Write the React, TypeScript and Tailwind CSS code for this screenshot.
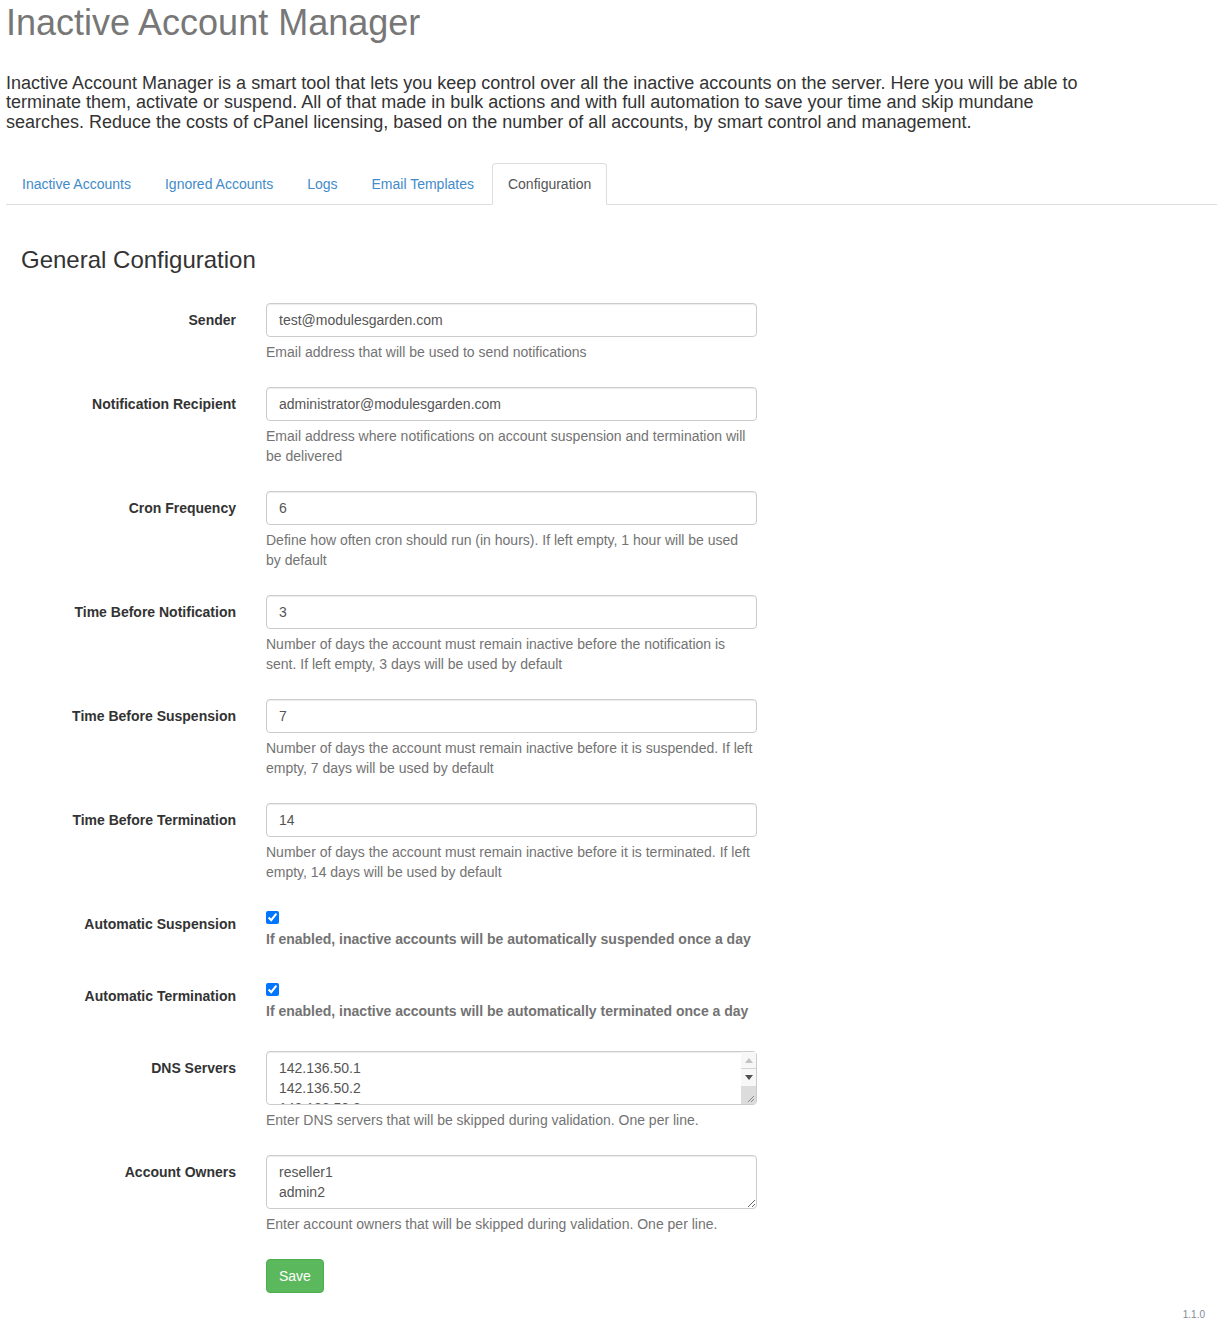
import React from 'react';

const tabs = ['Inactive Accounts', 'Ignored Accounts', 'Logs', 'Email Templates', 'Configuration'];

interface FieldProps {
  label: string;
  value: string;
  help: string;
}

function Label({ text }: { text: string }) {
  return (
    <div className="w-[230px] shrink-0 pr-[15px] pt-[7px] text-right text-[14px] font-bold leading-[20px] text-[#333]">
      {text}
    </div>
  );
}

function Help({ text }: { text: string }) {
  return <p className="mt-[5px] mb-[10px] w-[488px] text-[14px] leading-[20px] text-[#737373]">{text}</p>;
}

function TextField({ label, value, help }: FieldProps) {
  return (
    <div className="mb-[15px] flex">
      <Label text={label} />
      <div className="w-[521px] pl-[15px] pr-[15px]">
        <input
          type="text"
          defaultValue={value}
          className="block h-[34px] w-full rounded-[4px] border border-[#ccc] px-[12px] py-[6px] text-[14px] leading-[20px] text-[#555] shadow-[inset_0_1px_1px_rgba(0,0,0,0.075)] outline-none"
        />
        <Help text={help} />
      </div>
    </div>
  );
}

function CheckField({ label, help }: { label: string; help: string }) {
  return (
    <div className="mb-[15px] flex">
      <Label text={label} />
      <div className="w-[521px] pl-[15px] pr-[15px]">
        <div className="h-[22px] pt-[4px]">
          <input type="checkbox" defaultChecked className="m-0 block h-[13px] w-[13px]" />
        </div>
        <p className="mb-[15px] text-[14px] font-bold leading-[20px] text-[#737373]">{help}</p>
      </div>
    </div>
  );
}

// fake classic scrollbar, headless chrome hides the real one
function ScrollBar() {
  return (
    <div className="pointer-events-none absolute top-[1px] right-[1px] bottom-[1px] flex w-[15px] flex-col bg-[#f7f7f7]">
      <div className="flex h-[17px] items-center justify-center border-b border-[#d4d4d4]">
        <svg width="8" height="5" viewBox="0 0 8 5">
          <path d="M0 5 L4 0 L8 5 Z" fill="#c2c2c2" />
        </svg>
      </div>
      <div className="flex h-[17px] items-center justify-center">
        <svg width="8" height="5" viewBox="0 0 8 5">
          <path d="M0 0 L8 0 L4 5 Z" fill="#505050" />
        </svg>
      </div>
      <div className="relative flex-1 bg-[#dcdcdc]">
        <svg className="absolute right-[1px] bottom-[1px]" width="9" height="9" viewBox="0 0 9 9">
          <path d="M8 2 L2 8 M8 5 L5 8" stroke="#8a8a8a" strokeWidth="1" />
        </svg>
      </div>
    </div>
  );
}

function AreaField({ label, value, help, scroll }: FieldProps & { scroll?: boolean }) {
  return (
    <div className="mb-[15px] flex">
      <Label text={label} />
      <div className="w-[521px] pl-[15px] pr-[15px]">
        <div className="relative">
          <textarea
            rows={2}
            defaultValue={value}
            className="block h-[54px] w-full resize-y overflow-hidden rounded-[4px] border border-[#ccc] px-[12px] py-[6px] text-[14px] leading-[20px] text-[#555] shadow-[inset_0_1px_1px_rgba(0,0,0,0.075)] outline-none"
          />
          {scroll && <ScrollBar />}
        </div>
        <Help text={help} />
      </div>
    </div>
  );
}

export default function App() {
  return (
    <div className="min-h-[1323px] bg-white px-[6px] pt-[3px] font-['Liberation_Sans',Arial,sans-serif] text-[#333]">
      <h1 className="text-[36px] leading-[39.6px] text-[#777]">Inactive Account Manager</h1>
      <p className="mt-[31px] max-w-[1090px] text-[18px] leading-[19.8px] text-[#333]">
        Inactive Account Manager is a smart tool that lets you keep control over all the inactive accounts on the server. Here you
        will be able to terminate them, activate or suspend. All of that made in bulk actions and with full automation to save your
        time and skip mundane searches. Reduce the costs of cPanel licensing, based on the number of all accounts, by smart control
        and management.
      </p>

      <ul className="mt-[30px] flex border-b border-[#ddd]">
        {tabs.map((t) => {
          const active = t === 'Configuration';
          return (
            <li key={t} className="-mb-px mr-[2px]">
              <span
                className={
                  'block rounded-t-[4px] border px-[15px] py-[10px] text-[14px] leading-[20px] ' +
                  (active ? 'border-[#ddd] border-b-white bg-white text-[#555]' : 'border-transparent text-[#428bca]')
                }
              >
                {t}
              </span>
            </li>
          );
        })}
      </ul>

      <div className="px-[15px]">
        <h2 className="mt-[42px] text-[24px] leading-[26.4px] text-[#333]">General Configuration</h2>

        <form className="mt-[30px]">
          <TextField label="Sender" value="test@modulesgarden.com" help="Email address that will be used to send notifications" />
          <TextField
            label="Notification Recipient"
            value="administrator@modulesgarden.com"
            help="Email address where notifications on account suspension and termination will be delivered"
          />
          <TextField
            label="Cron Frequency"
            value="6"
            help="Define how often cron should run (in hours). If left empty, 1 hour will be used by default"
          />
          <TextField
            label="Time Before Notification"
            value="3"
            help="Number of days the account must remain inactive before the notification is sent. If left empty, 3 days will be used by default"
          />
          <TextField
            label="Time Before Suspension"
            value="7"
            help="Number of days the account must remain inactive before it is suspended. If left empty, 7 days will be used by default"
          />
          <TextField
            label="Time Before Termination"
            value="14"
            help="Number of days the account must remain inactive before it is terminated. If left empty, 14 days will be used by default"
          />
          <CheckField label="Automatic Suspension" help="If enabled, inactive accounts will be automatically suspended once a day" />
          <CheckField label="Automatic Termination" help="If enabled, inactive accounts will be automatically terminated once a day" />
          <AreaField
            label="DNS Servers"
            value={'142.136.50.1\n142.136.50.2\n142.136.50.3\n142.136.50.4'}
            help="Enter DNS servers that will be skipped during validation. One per line."
            scroll
          />
          <AreaField
            label="Account Owners"
            value={'reseller1\nadmin2'}
            help="Enter account owners that will be skipped during validation. One per line."
          />
          <div className="flex">
            <div className="w-[230px] shrink-0" />
            <div className="pl-[15px]">
              <button
                type="button"
                className="rounded-[4px] border border-[#4cae4c] bg-[#5cb85c] px-[12px] py-[6px] text-[14px] leading-[20px] text-white"
              >
                Save
              </button>
            </div>
          </div>
        </form>
      </div>

      <div className="mt-[15px] pr-[12px] text-right text-[10px] leading-[14px] text-[#838a96]">1.1.0</div>
    </div>
  );
}
